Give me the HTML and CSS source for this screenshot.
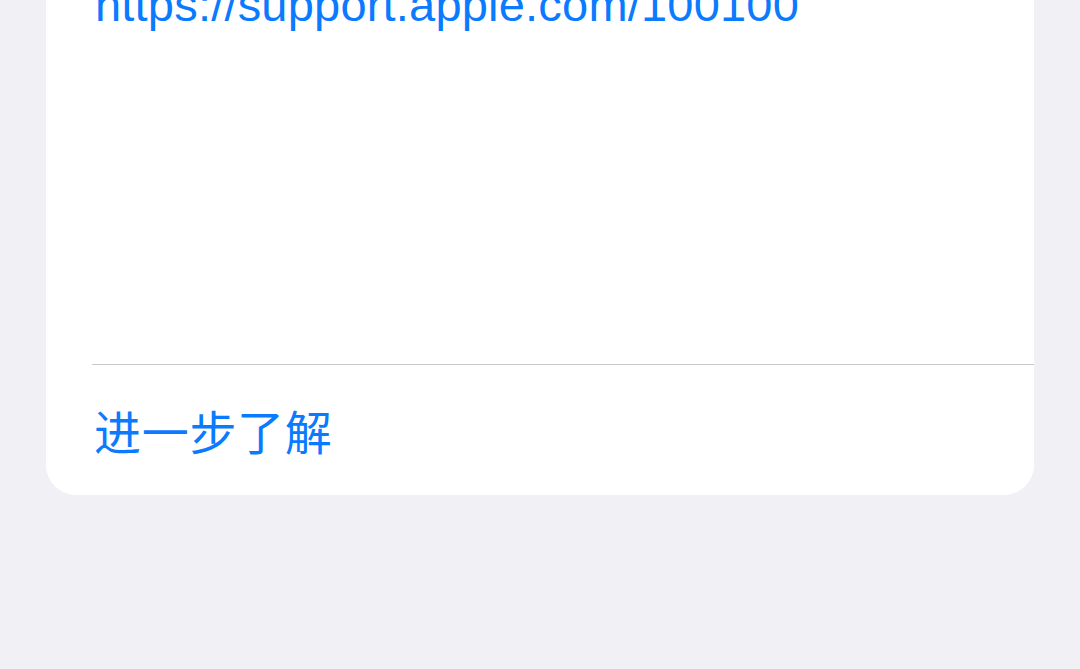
FILE: index.html
```html
<!DOCTYPE html>
<html lang="zh-CN">
<head>
    <meta charset="UTF-8">
    <meta name="viewport" content="width=device-width, initial-scale=1.0">
    <title>进一步了解</title>
    <link rel="stylesheet" href="styles.css">
</head>
<body>
    <div class="page">
        <div class="card">
            <div class="card-body">
                <a class="support-link" href="#">https://support.apple.com/100100</a>
            </div>
            <div class="card-footer">
                <a class="more-link" href="#">进一步了解</a>
            </div>
        </div>
    </div>
</body>
</html>
```

FILE: styles.css
```css
body {
    margin: 0;
    background-color: #f0f0f5;
    font-family: "Liberation Sans", "Noto Sans CJK SC", sans-serif;
}

.page {
    padding: 0 46px;
    height: 669px;
    overflow: hidden;
}

.card {
    margin-top: -22px;
    background-color: #ffffff;
    border-radius: 0 0 30px 30px;
}

.card-body {
    padding: 0 0 332px 49px;
}

.support-link {
    display: block;
    font-size: 47px;
    line-height: 54px;
    letter-spacing: 0.2px;
    color: #0a7aff;
    text-decoration: none;
    white-space: nowrap;
}

/* Row under the separator: the line starts at the text inset */
.card-footer {
    margin-left: 46px;
    height: 130px;
    border-top: 1px solid #c8c8cc;
    display: flex;
    align-items: center;
}

.more-link {
    padding-left: 2px;
    font-family: "Noto Sans CJK SC", sans-serif;
    font-size: 47px;
    line-height: 56px;
    letter-spacing: 0.7px;
    color: #0a7aff;
    text-decoration: none;
}
```
